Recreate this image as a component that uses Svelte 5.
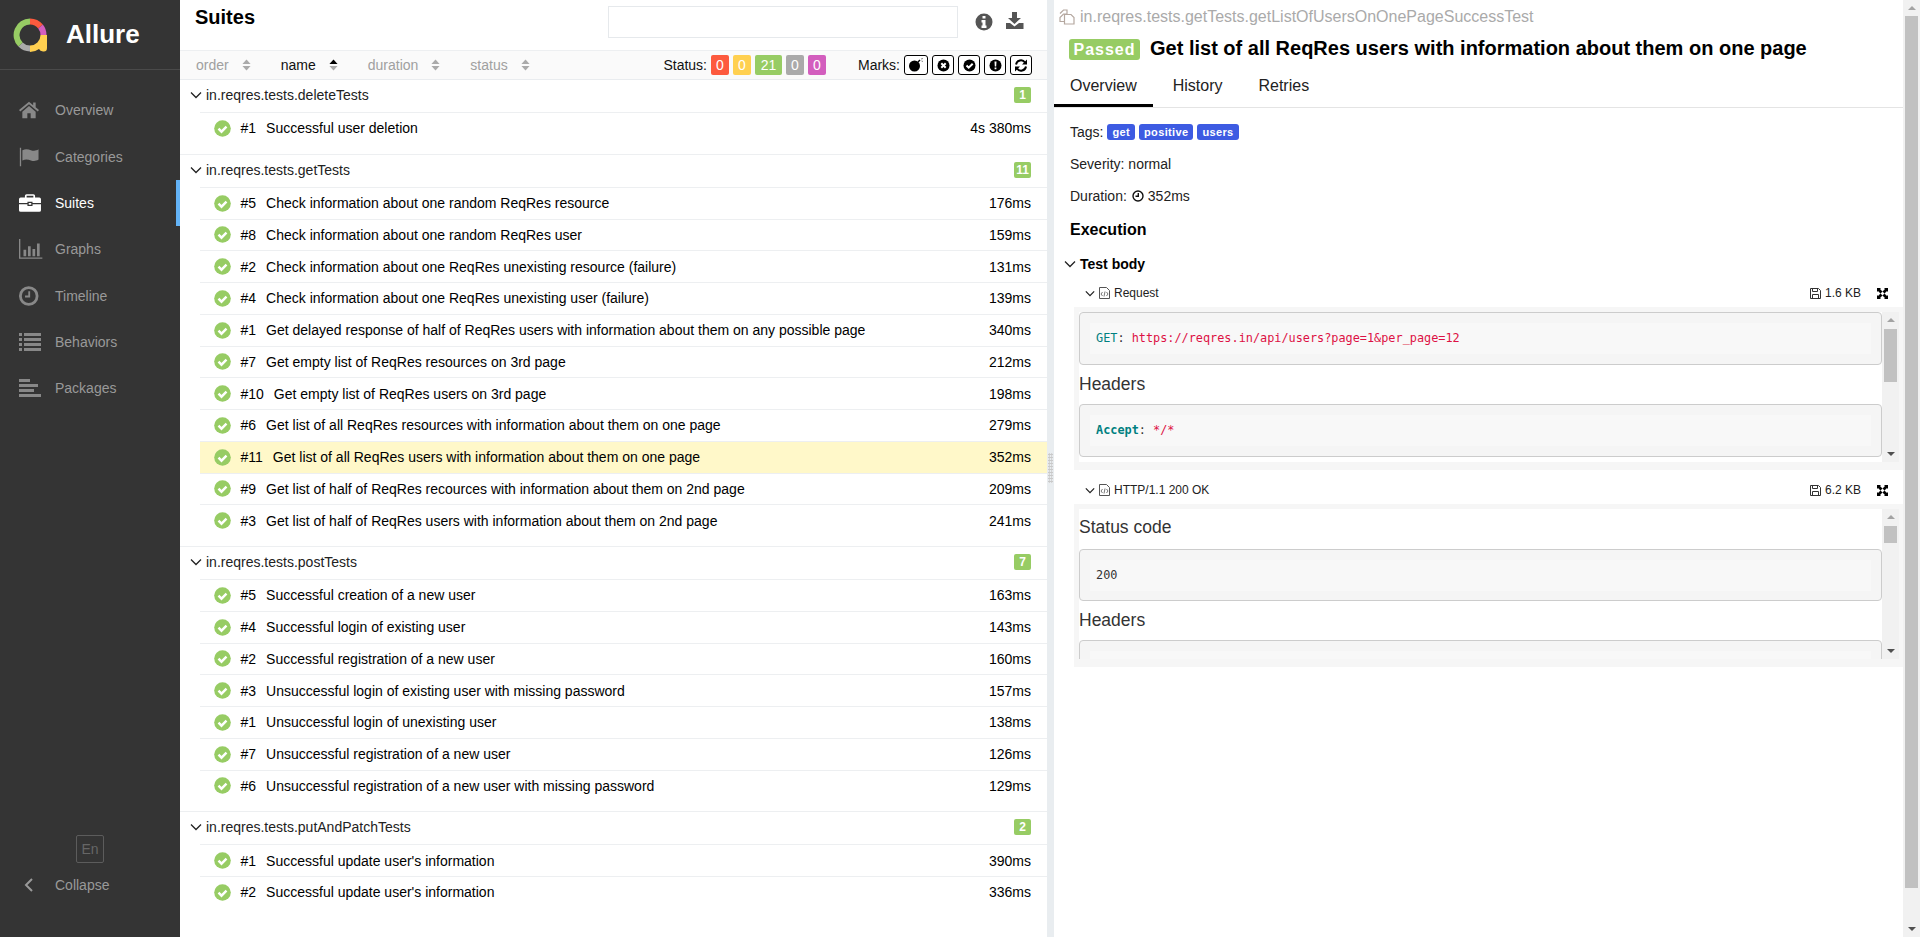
<script>
  const nav = [
    { label: 'Overview', icon: 'home', vb: '1 -1.4 31.2 28.8' },
    { label: 'Categories', icon: 'flag', vb: '1 -2.1 30.6 28.2' },
    { label: 'Suites', icon: 'case', vb: '0 -2.7 30.7 28.4', active: true },
    { label: 'Graphs', icon: 'chart', vb: '0 -1.3 28.9 26.7' },
    { label: 'Timeline', icon: 'clock', vb: '2.5 -.9 28 25.8' },
    { label: 'Behaviors', icon: 'list', vb: '0 0 26 24' },
    { label: 'Packages', icon: 'align', vb: '0 -1 26 24' }
  ];

  const groups = [
    { name: 'in.reqres.tests.deleteTests', rows: [
      ['#1', 'Successful user deletion', '4s 380ms']
    ] },
    { name: 'in.reqres.tests.getTests', rows: [
      ['#5', 'Check information about one random ReqRes resource', '176ms'],
      ['#8', 'Check information about one random ReqRes user', '159ms'],
      ['#2', 'Check information about one ReqRes unexisting resource (failure)', '131ms'],
      ['#4', 'Check information about one ReqRes unexisting user (failure)', '139ms'],
      ['#1', 'Get delayed response of half of ReqRes users with information about them on any possible page', '340ms'],
      ['#7', 'Get empty list of ReqRes resources on 3rd page', '212ms'],
      ['#10', 'Get empty list of ReqRes users on 3rd page', '198ms'],
      ['#6', 'Get list of all ReqRes resources with information about them on one page', '279ms'],
      ['#11', 'Get list of all ReqRes users with information about them on one page', '352ms', true],
      ['#9', 'Get list of half of ReqRes recources with information about them on 2nd page', '209ms'],
      ['#3', 'Get list of half of ReqRes users with information about them on 2nd page', '241ms']
    ] },
    { name: 'in.reqres.tests.postTests', rows: [
      ['#5', 'Successful creation of a new user', '163ms'],
      ['#4', 'Successful login of existing user', '143ms'],
      ['#2', 'Successful registration of a new user', '160ms'],
      ['#3', 'Unsuccessful login of existing user with missing password', '157ms'],
      ['#1', 'Unsuccessful login of unexisting user', '138ms'],
      ['#7', 'Unsuccessful registration of a new user', '126ms'],
      ['#6', 'Unsuccessful registration of a new user with missing password', '129ms']
    ] },
    { name: 'in.reqres.tests.putAndPatchTests', rows: [
      ['#1', "Successful update user's information", '390ms'],
      ['#2', "Successful update user's information", '336ms']
    ] }
  ];

  const sorters = [
    { label: 'order' },
    { label: 'name', on: true },
    { label: 'duration' },
    { label: 'status' }
  ];

  const statuses = [
    { n: 0, c: '#fd5a3e' },
    { n: 0, c: '#ffd050' },
    { n: 21, c: '#97cc64' },
    { n: 0, c: '#aaaaaa' },
    { n: 0, c: '#d35ebe' }
  ];
</script>

<div class="app">
  <aside class="side">
    <div class="brand">
      <svg class="logo" width="34" height="34" viewBox="0 0 34 34">
        <g fill="none" stroke-width="6">
          <path d="M17 3.500A13.500 13.500 0 0 1 27.500 8.500" stroke="#fd5a3e" />
          <path d="M27.500 8.500A13.500 13.500 0 0 1 30.500 17" stroke="#d35ebe" />
          <path d="M17 30.500A13.500 13.500 0 0 1 7.500 26.500" stroke="#aaaaaa" />
          <path d="M7.500 26.500A13.500 13.500 0 0 1 17 3.500" stroke="#97cc64" />
        </g>
        <path d="M17 27.500A10.500 10.500 0 0 0 27.500 17H34V30Q34 34 30 33.500Q27 33 26 31Q22 34 17 34Z" fill="#ffd050" />
      </svg>
      <span class="brand-name">Allure</span>
    </div>
    <nav class="menu">
      {#each nav as item}
        <div class="menu-item" class:active={item.active}>
          <svg class="menu-icon" width="26" height="24" viewBox={item.vb} preserveAspectRatio="xMinYMid meet" fill="currentColor">
            {#if item.icon === 'home'}
              <path d="M13 3 1 13l1.500 1.800L13 6l10.500 8.800L25 13l-4-3.300V4h-3v3.200zM5 15v8h6v-6h4v6h6v-8l-8-6.700z" />
            {:else if item.icon === 'flag'}
              <path d="M2 1h1.500v22H2zM5 4c4-2 7-1 10 0s6 1 9-1v12c-3 2-6 2-9 1s-6-2-10 0z" />
            {:else if item.icon === 'case'}
              <path d="M9 1h8a2 2 0 0 1 2 2v2h5a2 2 0 0 1 2 2v4.500H16V10h-6v1.500H0V7a2 2 0 0 1 2-2h5V3a2 2 0 0 1 2-2zm0 2v2h8V3zM0 13h10v2h6v-2h10v7a2 2 0 0 1-2 2H2a2 2 0 0 1-2-2zM11.500 11.500h3v2h-3z" />
            {:else if item.icon === 'chart'}
              <path d="M0 1h1.500v20.500H26V23H0zM5 13h3v7H5zM10 9h3v11h-3zM15 12h3v8h-3zM20 6h3v14h-3z" />
            {:else if item.icon === 'clock'}
              <path fill-rule="evenodd" d="M13 1.500a10.500 10.500 0 1 0 0 21 10.500 10.500 0 0 0 0-21zm0 3a7.500 7.500 0 1 1 0 15 7.500 7.500 0 0 1 0-15zM12.500 7h2v6.500H9v-2h3.500z" />
            {:else if item.icon === 'list'}
              <path d="M0 3h3v3H0zM5 3h17v3H5zM0 8h3v3H0zM5 8h17v3H5zM0 13h3v3H0zM5 13h17v3H5zM0 18h3v3H0zM5 18h17v3H5z" />
            {:else}
              <path d="M0 2h11v3H0zM0 7h19v3H0zM0 12h15v3H0zM0 17h22v3H0z" />
            {/if}
          </svg>
          <span>{item.label}</span>
        </div>
      {/each}
    </nav>
    <div class="side-foot">
      <div class="lang">En</div>
      <div class="collapse">
        <svg width="10" height="14" viewBox="0 0 10 14" fill="none" stroke="currentColor" stroke-width="2"><path d="M8 1 2 7l6 6" /></svg>
        <span>Collapse</span>
      </div>
    </div>
  </aside>

  <section class="tree-pane">
    <header class="tree-head">
      <h2>Suites</h2>
      <div class="search"></div>
      <svg class="tool" width="18" height="18" viewBox="0 0 18 18" fill="#555"><path fill-rule="evenodd" d="M9 .5a8.500 8.500 0 1 0 0 17 8.500 8.500 0 0 0 0-17zM7.500 3h3v2.500h-3zM6.500 7h4v5.500h1V15h-5v-2.500h1v-3h-1z" /></svg>
      <svg class="tool dl" width="20" height="18" viewBox="0 0 20 18" fill="#555"><path d="M7 0h5v6h4l-6.500 6L3 6h4zM1 11h4l4.500 3.500L14 11h4.500v6H1z" /></svg>
    </header>
    <div class="toolbar">
      {#each sorters as s}
        <span class="sorter" class:on={s.on}>
          {s.label}
          <svg width="9" height="12" viewBox="0 0 10 12"><path d="M5 0 9.500 4.800H.5z" fill={s.on ? '#000' : '#aaa'} /><path d="M5 12 .5 7.200h9z" fill="#aaa" /></svg>
        </span>
      {/each}
      <span class="status-filter">
        Status:
        {#each statuses as st}
          <span class="st" class:wide={st.n > 9} style="background:{st.c}">{st.n}</span>
        {/each}
      </span>
      <span class="marks">
        Marks:
        <span class="mark wide">
          <svg width="16" height="14" viewBox="0 0 16 14"><circle cx="6.500" cy="8" r="5.500" /><path d="M10 4l2-2" stroke="#000" stroke-width="1.500" /><path d="M13 1l2-.5M13.500 3l1.500.5" stroke="#888" /></svg>
        </span>
        <span class="mark">
          <svg width="13" height="13" viewBox="0 0 13 13"><circle cx="6.500" cy="6.500" r="6" /><path d="m4.300 4.300 4.400 4.400m0-4.400L4.300 8.700" stroke="#fff" stroke-width="2" /></svg>
        </span>
        <span class="mark">
          <svg width="13" height="13" viewBox="0 0 13 13"><circle cx="6.500" cy="6.500" r="6" /><path d="m3.500 6.500 2.200 2.200 4-4" stroke="#fff" stroke-width="2" fill="none" /></svg>
        </span>
        <span class="mark">
          <svg width="13" height="13" viewBox="0 0 13 13"><circle cx="6.500" cy="6.500" r="6" /><path d="M5.500 2.500h2l-.3 5h-1.400zM5.600 8.500h1.800v1.800H5.600z" fill="#fff" /></svg>
        </span>
        <span class="mark">
          <svg width="14" height="13" viewBox="0 0 14 13" fill="none" stroke="#000" stroke-width="2"><path d="M2 5.500A5 5 0 0 1 11 3.500" /><path d="M12 7.500A5 5 0 0 1 3 9.500" /><path d="M13 .5v5H8zM1 12.500v-5h5z" fill="#000" stroke="none" /></svg>
        </span>
      </span>
    </div>

    <div class="groups">
      {#each groups as g}
        <div class="group">
          <div class="group-head">
            <svg class="chev" width="12" height="8" viewBox="0 0 12 8" fill="none" stroke="#222" stroke-width="1.300"><path d="M1 1.500 6 6.500l5-5" /></svg>
            <span class="group-name">{g.name}</span>
            <span class="count">{g.rows.length}</span>
          </div>
          {#each g.rows as r}
            <div class="row" class:sel={r[3]}>
              <svg class="ok" width="17" height="17" viewBox="0 0 17 17"><circle cx="8.500" cy="8.500" r="8.300" fill="#97cc64" /><path d="m4.500 8.700 3 3 5-5" fill="none" stroke="#fff" stroke-width="2.400" /></svg>
              <span class="num">{r[0]}</span>
              <span class="title">{r[1]}</span>
              <span class="dur">{r[2]}</span>
            </div>
          {/each}
        </div>
      {/each}
    </div>
  </section>

  <div class="splitter"><span class="grip"></span></div>

  <section class="detail">
    <div class="path">
      <svg width="16" height="16" viewBox="0 0 16 16" fill="none" stroke="#b5a8a0" stroke-width="1.200"><path d="M1 4.500 4.500 1H8v4H4.500L1 8.500v4h4" /><path d="M5.500 5.500H12l3 3V15H5.500z" /></svg>
      in.reqres.tests.getTests.getListOfUsersOnOnePageSuccessTest
    </div>
    <div class="title-line">
      <span class="passed">Passed</span>
      <h2>Get list of all ReqRes users with information about them on one page</h2>
    </div>
    <div class="tabs">
      <span class="tab cur">Overview</span>
      <span class="tab">History</span>
      <span class="tab">Retries</span>
    </div>
    <div class="info">
      <div class="line tags-line">Tags: <span class="tag">get</span><span class="tag">positive</span><span class="tag">users</span></div>
      <div class="line">Severity: normal</div>
      <div class="line">
        Duration:
        <svg class="dur-ic" width="12" height="12" viewBox="0 0 12 12" fill="none" stroke="#111" stroke-width="1.400"><circle cx="6" cy="6" r="5" /><path d="M6.300 3v3.300H3.500" /></svg>
        352ms
      </div>
      <h3>Execution</h3>
    </div>
    <div class="step-head">
      <svg width="12" height="8" viewBox="0 0 12 8" fill="none" stroke="#222" stroke-width="1.300"><path d="M1 1.500 6 6.500l5-5" /></svg>
      Test body
    </div>

    <div class="att-head">
      <svg width="10" height="7" viewBox="0 0 12 8" fill="none" stroke="#222" stroke-width="1.500"><path d="M1 1.500 6 6.500l5-5" /></svg>
      <svg class="file" width="11" height="12" viewBox="0 0 11 12" fill="none" stroke="#555"><path d="M.5.500h7l3 3v8H.5z" /><path d="M3.500 5 2 7l1.500 2M7.500 5 9 7 7.500 9M6 4.500 5 9.500" stroke-width=".8" /></svg>
      <span class="att-name">Request</span>
      <svg class="save" width="11" height="11" viewBox="0 0 11 11" fill="none" stroke="#333"><path d="M.5.500h8l2 2v8H.5z" /><path d="M2.500.500v3h5v-3M2.500 10.500v-4h6v4" /></svg>
      <span class="size">1.6 KB</span>
      <svg class="expand" width="11" height="11" viewBox="0 0 11 11"><path d="M0 0h4L3 1l2.500 2.500L3.500 5.500 1 3 0 4zM11 0v4L10 3 7.500 5.500 5.500 3.500 8 1 7 0zM0 11V7l1 1 2.500-2.500 2 2L3 10l1 1zM11 11H7l1-1-2.500-2.500 2-2L10 8l1-1z" /></svg>
    </div>
    <div class="att-body">
      <div class="att-scroll">
        <div class="inner">
          <pre class="code"><code><span class="k">GET</span>: <span class="v">https://reqres.in/api/users?page=1&per_page=12</span></code></pre>
          <h4>Headers</h4>
          <pre class="code"><code><span class="kb">Accept</span>: <span class="v">*/*</span></code></pre>
        </div>
        <div class="sbar">
          <span class="up"></span>
          <span class="thumb t-req"></span>
          <span class="down"></span>
        </div>
      </div>
    </div>

    <div class="att-head second">
      <svg width="10" height="7" viewBox="0 0 12 8" fill="none" stroke="#222" stroke-width="1.500"><path d="M1 1.500 6 6.500l5-5" /></svg>
      <svg class="file" width="11" height="12" viewBox="0 0 11 12" fill="none" stroke="#555"><path d="M.5.500h7l3 3v8H.5z" /><path d="M3.500 5 2 7l1.500 2M7.500 5 9 7 7.500 9M6 4.500 5 9.500" stroke-width=".8" /></svg>
      <span class="att-name">HTTP/1.1 200 OK</span>
      <svg class="save" width="11" height="11" viewBox="0 0 11 11" fill="none" stroke="#333"><path d="M.5.500h8l2 2v8H.5z" /><path d="M2.500.500v3h5v-3M2.500 10.500v-4h6v4" /></svg>
      <span class="size">6.2 KB</span>
      <svg class="expand" width="11" height="11" viewBox="0 0 11 11"><path d="M0 0h4L3 1l2.500 2.500L3.500 5.500 1 3 0 4zM11 0v4L10 3 7.500 5.500 5.500 3.500 8 1 7 0zM0 11V7l1 1 2.500-2.500 2 2L3 10l1 1zM11 11H7l1-1-2.500-2.500 2-2L10 8l1-1z" /></svg>
    </div>
    <div class="att-body">
      <div class="att-scroll">
        <div class="inner">
          <h4 class="first">Status code</h4>
          <pre class="code short"><code>200</code></pre>
          <h4>Headers</h4>
          <pre class="code"><code>&nbsp;</code></pre>
        </div>
        <div class="sbar">
          <span class="up"></span>
          <span class="thumb t-res"></span>
          <span class="down"></span>
        </div>
      </div>
    </div>
  </section>

  <div class="page-bar">
    <span class="up"></span>
    <span class="page-thumb"></span>
    <span class="down"></span>
  </div>
</div>

<style>
  :global(body) {
    margin: 0;
    font-family: "Liberation Sans", Arial, sans-serif;
    font-size: 14px;
    color: #000;
    background: #fff;
  }

  .app {
    display: flex;
    height: 937px;
    overflow: hidden;
  }

  /* sidebar */
  .side {
    width: 180px;
    flex: none;
    background: #343434;
    display: flex;
    flex-direction: column;
    color: #999;
  }

  .brand {
    height: 70px;
    box-sizing: border-box;
    border-bottom: 1px solid #4a4a4a;
    display: flex;
    align-items: center;
    padding-left: 13px;
    gap: 19px;
  }

  .brand-name {
    color: #fff;
    font-size: 26px;
    font-weight: 700;
  }

  .menu {
    padding-top: 17.3px;
    flex: 1;
  }

  .menu-item {
    height: 46.3px;
    display: flex;
    align-items: center;
    padding-left: 19px;
    gap: 10px;
    box-sizing: border-box;
    font-size: 14px;
    color: #999;
  }

  .menu-item.active {
    color: #fff;
    border-right: 4px solid #63b3f6;
  }

  .menu-icon {
    flex: none;
    color: #888;
  }

  .active .menu-icon {
    color: #fff;
  }

  .side-foot {
    padding-bottom: 43px;
  }

  .lang {
    width: 26px;
    height: 26px;
    border: 1px solid #5c5c5c;
    border-radius: 2px;
    color: #666;
    font-size: 14px;
    line-height: 26px;
    text-align: center;
    margin: 0 0 13px 76px;
  }

  .collapse {
    display: flex;
    align-items: center;
    padding-left: 24px;
    gap: 21px;
    color: #999;
    height: 18px;
  }

  /* suites tree */
  .tree-pane {
    width: 867px;
    flex: none;
  }

  .tree-head {
    height: 50px;
    display: flex;
    align-items: flex-start;
    box-sizing: border-box;
  }

  .tree-head h2 {
    margin: 6px 0 0 15px;
    font-size: 20px;
    line-height: 23px;
    font-weight: 700;
    flex: 1;
  }

  .search {
    width: 348px;
    height: 30px;
    border: 1px solid #e6e9ec;
    margin-top: 6px;
  }

  .tool {
    margin: 13px 0 0 17px;
  }

  .tool.dl {
    margin: 12px 22px 0 12px;
  }

  .toolbar {
    height: 30px;
    box-sizing: border-box;
    background: #fafafa;
    border-top: 1px solid #edeff1;
    border-bottom: 1px solid #e9ecef;
    display: flex;
    align-items: center;
    padding-left: 16px;
    color: #999;
    font-size: 14px;
  }

  .sorter {
    display: flex;
    align-items: center;
    gap: 13px;
    margin-right: 30px;
    color: #a0a0a0;
  }

  .sorter.on {
    color: #111;
  }

  .status-filter {
    margin-left: auto;
    display: flex;
    align-items: center;
    color: #111;
    gap: 4px;
  }

  .st {
    color: #fff;
    height: 20px;
    width: 18px;
    box-sizing: border-box;
    border-radius: 2px;
    line-height: 20px;
    text-align: center;
    font-size: 14px;
  }

  .st.wide {
    width: 27px;
  }

  .marks {
    display: flex;
    align-items: center;
    color: #111;
    gap: 4px;
    margin: 0 15px 0 32px;
  }

  .mark {
    box-sizing: border-box;
    width: 22px;
    height: 20px;
    border: 1px solid #000;
    border-radius: 3px;
    background: #fff;
    display: flex;
    align-items: center;
    justify-content: center;
  }

  .mark.wide {
    width: 24px;
  }

  .group {
    border-bottom: 1px solid #edeff1;
    padding-bottom: 10px;
  }

  .group:last-child {
    border-bottom: 0;
  }

  .group-head {
    height: 32px;
    padding-bottom: 2px;
    box-sizing: border-box;
    display: flex;
    align-items: center;
    margin-left: 10px;
    font-size: 14px;
    color: #222;
  }

  .chev {
    flex: none;
    margin-right: 4px;
  }

  .group-name {
    flex: 1;
  }

  .count {
    width: 17px;
    height: 16px;
    line-height: 16px;
    text-align: center;
    color: #fff;
    background: #97cc64;
    border-radius: 2px;
    font-size: 12px;
    font-weight: 700;
    margin-right: 16px;
  }

  .row {
    height: 31.75px;
    box-sizing: border-box;
    margin-left: 20px;
    border-top: 1px solid #edeff1;
    display: flex;
    align-items: center;
    padding: 0 16px 0 13.5px;
  }

  .row.sel {
    background: #fff8c9;
  }

  .ok {
    flex: none;
    margin-right: 10px;
  }

  .num {
    margin-right: 10px;
  }

  .title {
    flex: 1;
  }

  /* splitter */
  .splitter {
    width: 7px;
    flex: none;
    background: #e9edf0;
    display: flex;
    align-items: center;
    justify-content: center;
  }

  .grip {
    width: 5px;
    height: 30px;
    background-image: radial-gradient(#c9c9c9 1px, transparent 1px);
    background-size: 2.500px 3px;
    margin-top: -2px;
  }

  /* detail */
  .detail {
    flex: 1;
    min-width: 0;
  }

  .path {
    height: 33px;
    display: flex;
    align-items: center;
    gap: 5px;
    padding-left: 5px;
    font-size: 16px;
    color: #aaa;
  }

  .title-line {
    display: flex;
    align-items: center;
    height: 32px;
    padding-left: 15px;
    gap: 10px;
  }

  .passed {
    background: #97cc64;
    color: #fff;
    font-weight: 700;
    font-size: 16px;
    letter-spacing: 1px;
    width: 71px;
    height: 21px;
    line-height: 21px;
    text-align: center;
    border-radius: 3px;
  }

  .title-line h2 {
    margin: -2px 0 0;
    font-size: 20px;
    font-weight: 700;
  }

  .tabs {
    display: flex;
    height: 41px;
    box-sizing: border-box;
    border-bottom: 1px solid #e4e4e4;
    margin-top: 2px;
  }

  .tab {
    padding: 10px 16px 0;
    font-size: 16px;
    color: #222;
    margin-right: 4px;
  }

  .tab.cur {
    border-bottom: 3px solid #000;
    height: 40px;
    box-sizing: border-box;
  }

  .info {
    padding: 14px 16px 0;
    font-size: 14px;
    color: #222;
  }

  .line {
    height: 20px;
    line-height: 20px;
    margin-bottom: 12px;
    display: flex;
    align-items: center;
    gap: 4px;
  }

  .tag {
    background: #3d5be2;
    color: #fff;
    font-size: 11px;
    font-weight: 700;
    letter-spacing: .35px;
    padding: 0 5px;
    height: 16px;
    line-height: 16px;
    border-radius: 3px;
  }

  .dur-ic {
    margin: 0 0 0 1px;
  }

  h3 {
    margin: 0;
    font-size: 16px;
    line-height: 24px;
    font-weight: 700;
    color: #000;
  }

  .step-head {
    margin: 12px 0 0 10px;
    height: 20px;
    display: flex;
    align-items: center;
    gap: 4px;
    font-size: 14px;
    font-weight: 700;
    color: #000;
  }

  .att-head {
    height: 22px;
    margin: 8px 15px 3px 31px;
    display: flex;
    align-items: center;
    gap: 4px;
    font-size: 12px;
    color: #222;
  }

  .att-head.second {
    margin-top: 9px;
  }

  .att-name {
    flex: 1;
  }

  .save {
    flex: none;
  }

  .size {
    margin: 0 12px 0 0;
  }

  .att-body {
    margin: 0 0 0 20px;
    padding: 5px 4px 8px 5px;
    background: #f6f6f6;
  }

  .att-scroll {
    display: flex;
    overflow: hidden;
    background: #fff;
    height: 150px;
  }

  .inner {
    flex: 1;
    min-width: 0;
    overflow: hidden;
  }

  .code {
    margin: 0;
    border: 1px solid #ccc;
    border-radius: 4px;
    background: #f5f5f5;
    padding: 10px;
    height: 53px;
    box-sizing: border-box;
  }

  .code.short {
    height: 52px;
  }

  .code code {
    display: block;
    background: #f8f8f8;
    padding: 0 6px;
    height: 31px;
    line-height: 31px;
    font-family: "DejaVu Sans Mono", monospace;
    font-size: 11.85px;
    color: #333;
  }

  .k {
    color: #008080;
  }

  .kb {
    color: #008080;
    font-weight: 700;
  }

  .v {
    color: #dd1144;
  }

  h4 {
    margin: 0;
    font-size: 17.5px;
    font-weight: 400;
    line-height: 38px;
    color: #333;
    height: 39px;
  }

  h4.first {
    height: 40px;
    line-height: 37px;
  }

  .sbar {
    width: 17px;
    flex: none;
    background: #f1f1f1;
    display: flex;
    flex-direction: column;
    align-items: center;
    position: relative;
    justify-content: space-between;
    padding: 6px 0;
    box-sizing: border-box;
  }

  .up {
    width: 0;
    height: 0;
    border: 4px solid transparent;
    border-top: 0;
    border-bottom: 4px solid #a3a3a3;
  }

  .down {
    width: 0;
    height: 0;
    border: 4px solid transparent;
    border-bottom: 0;
    border-top: 4px solid #505050;
  }

  .thumb {
    position: absolute;
    left: 2px;
    width: 13px;
    top: 17px;
    background: #c1c1c1;
  }

  .t-req {
    height: 53px;
  }

  .t-res {
    height: 17px;
  }

  /* window scrollbar */
  .page-bar {
    width: 17px;
    height: 937px;
    flex: none;
    background: #f1f1f1;
    display: flex;
    flex-direction: column;
    align-items: center;
    padding: 6px 0;
    box-sizing: border-box;
    justify-content: space-between;
    position: relative;
  }

  .page-thumb {
    position: absolute;
    left: 2px;
    right: 2px;
    top: 16px;
    height: 872px;
    background: #c1c1c1;
  }
</style>
